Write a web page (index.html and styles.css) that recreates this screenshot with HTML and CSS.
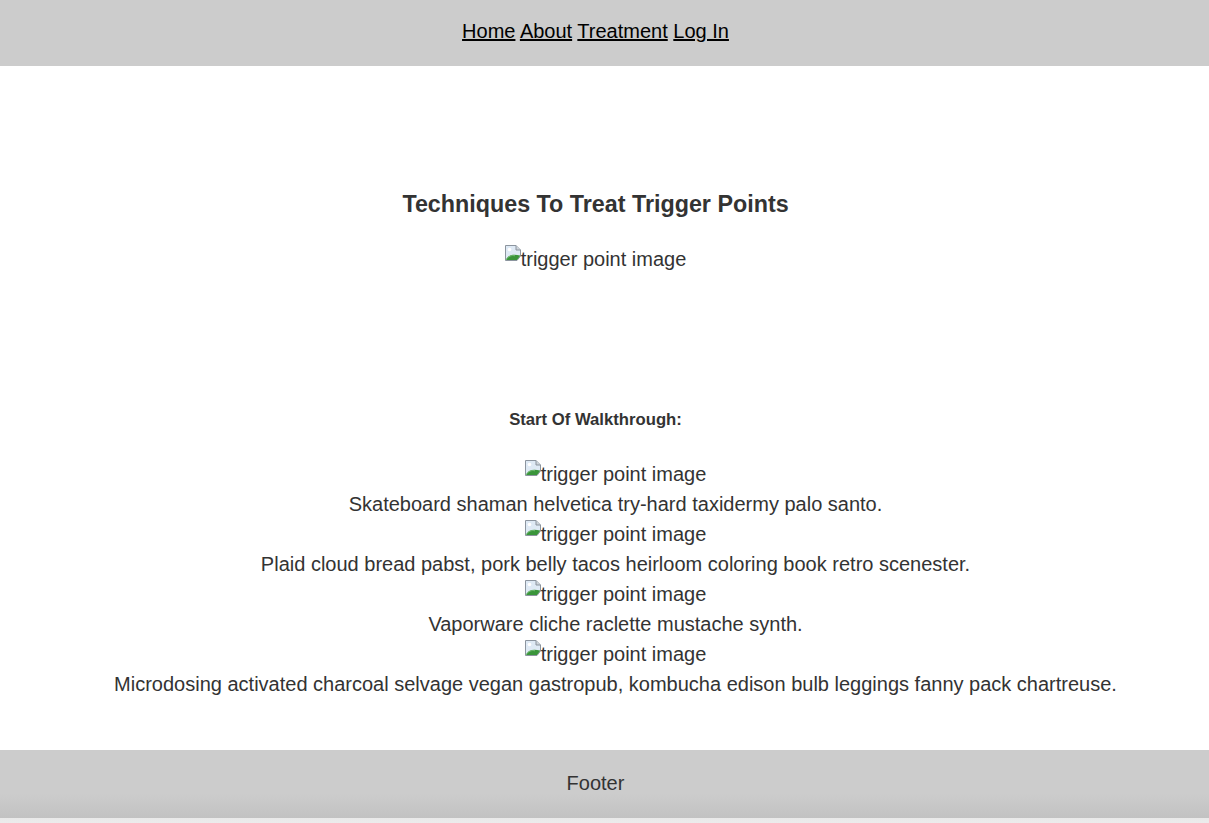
FILE: index.html
```html
<!DOCTYPE html>
<html lang="en">
<head>
<meta charset="utf-8">
<title>Treatment</title>
<link rel="stylesheet" href="styles.css">
</head>
<body>
<header class="nav">
  <nav class="nav-links"><a href="#">Home</a> <a href="#">About</a> <a href="#">Treatment</a> <a href="#">Log In</a></nav>
</header>
<main class="main">
  <section class="hero">
    <h2 class="hero-title">Techniques To Treat Trigger Points</h2>
    <div class="line"><span class="broken"><svg class="broken-icon" viewBox="0 0 16 16" width="16" height="16"><path d="M0.5 0.5 H11 L15.5 5 V11 L12 15.5 H0.5 Z" fill="#dfeaf5" stroke="#8c959f"/><path d="M11 0.5 V5 H15.5" fill="#cfd5db" stroke="#8c959f"/><path d="M1 15 C3 10 8 8.5 15 10.5 V11 L12 15 Z" fill="#3a953a"/><path d="M1 15 C3 11 7 10 10 10.8" fill="none" stroke="#76bb76" stroke-width="1"/><circle cx="4.5" cy="4.5" r="1.8" fill="#fff"/></svg>trigger point image</span></div>
  </section>
  <section class="walk">
    <h4 class="walk-title">Start Of Walkthrough:</h4>
    <div class="steps">
      <div class="line"><span class="broken"><svg class="broken-icon" viewBox="0 0 16 16" width="16" height="16"><path d="M0.5 0.5 H11 L15.5 5 V11 L12 15.5 H0.5 Z" fill="#dfeaf5" stroke="#8c959f"/><path d="M11 0.5 V5 H15.5" fill="#cfd5db" stroke="#8c959f"/><path d="M1 15 C3 10 8 8.5 15 10.5 V11 L12 15 Z" fill="#3a953a"/><path d="M1 15 C3 11 7 10 10 10.8" fill="none" stroke="#76bb76" stroke-width="1"/><circle cx="4.5" cy="4.5" r="1.8" fill="#fff"/></svg>trigger point image</span></div>
      <p class="line">Skateboard shaman helvetica try-hard taxidermy palo santo.</p>
      <div class="line"><span class="broken"><svg class="broken-icon" viewBox="0 0 16 16" width="16" height="16"><path d="M0.5 0.5 H11 L15.5 5 V11 L12 15.5 H0.5 Z" fill="#dfeaf5" stroke="#8c959f"/><path d="M11 0.5 V5 H15.5" fill="#cfd5db" stroke="#8c959f"/><path d="M1 15 C3 10 8 8.5 15 10.5 V11 L12 15 Z" fill="#3a953a"/><path d="M1 15 C3 11 7 10 10 10.8" fill="none" stroke="#76bb76" stroke-width="1"/><circle cx="4.5" cy="4.5" r="1.8" fill="#fff"/></svg>trigger point image</span></div>
      <p class="line">Plaid cloud bread pabst, pork belly tacos heirloom coloring book retro scenester.</p>
      <div class="line"><span class="broken"><svg class="broken-icon" viewBox="0 0 16 16" width="16" height="16"><path d="M0.5 0.5 H11 L15.5 5 V11 L12 15.5 H0.5 Z" fill="#dfeaf5" stroke="#8c959f"/><path d="M11 0.5 V5 H15.5" fill="#cfd5db" stroke="#8c959f"/><path d="M1 15 C3 10 8 8.5 15 10.5 V11 L12 15 Z" fill="#3a953a"/><path d="M1 15 C3 11 7 10 10 10.8" fill="none" stroke="#76bb76" stroke-width="1"/><circle cx="4.5" cy="4.5" r="1.8" fill="#fff"/></svg>trigger point image</span></div>
      <p class="line">Vaporware cliche raclette mustache synth.</p>
      <div class="line"><span class="broken"><svg class="broken-icon" viewBox="0 0 16 16" width="16" height="16"><path d="M0.5 0.5 H11 L15.5 5 V11 L12 15.5 H0.5 Z" fill="#dfeaf5" stroke="#8c959f"/><path d="M11 0.5 V5 H15.5" fill="#cfd5db" stroke="#8c959f"/><path d="M1 15 C3 10 8 8.5 15 10.5 V11 L12 15 Z" fill="#3a953a"/><path d="M1 15 C3 11 7 10 10 10.8" fill="none" stroke="#76bb76" stroke-width="1"/><circle cx="4.5" cy="4.5" r="1.8" fill="#fff"/></svg>trigger point image</span></div>
      <p class="line">Microdosing activated charcoal selvage vegan gastropub, kombucha edison bulb leggings fanny pack chartreuse.</p>
    </div>
  </section>
</main>
<footer class="footer">Footer</footer>
</body>
</html>
```
FILE: styles.css
```css
* { box-sizing: border-box; }
html, body { margin: 0; padding: 0; }
body {
  font-family: "Liberation Sans", Arial, sans-serif;
  color: #333;
  background: #fff;
  min-height: 823px;
  display: flex;
  flex-direction: column;
}
.nav {
  height: 66px;
  background: #ccc;
  display: flex;
  align-items: center;
  justify-content: center;
  padding-bottom: 4px;
  padding-right: 18px;
}
.nav-links {
  font-size: 20px;
  line-height: 24px;
}
.nav-links a {
  color: #000;
  text-decoration: underline;
}
.main {
  text-align: center;
  flex: 1;
  padding-right: 18px;
}
.hero {
  padding-top: 125px;
}
.hero-title {
  margin: 0;
  font-size: 23.3px;
  line-height: 26px;
  font-weight: bold;
}
.line {
  margin: 0;
  font-size: 20px;
  line-height: 30px;
}
.hero .line {
  margin-top: 27px;
}
.broken {
  display: inline-flex;
  align-items: baseline;
}
.broken-icon {
  display: block;
  flex: none;
  width: 16px;
  height: 16px;
  align-self: flex-start;
  margin-top: 1px;
}
.walk {
  padding-top: 136px;
  padding-bottom: 51px;
}
.walk-title {
  margin: 0 0 29px;
  font-size: 16.7px;
  line-height: 20px;
  font-weight: bold;
}
.steps {
  padding-left: 40px;
}
.footer {
  height: 73px;
  background: linear-gradient(#ccc 0, #ccc 60%, #c2c2c2 68px, #e9e9e9 68px, #ececec 73px);
  font-size: 20px;
  line-height: 66px;
  text-align: center;
  padding-right: 18px;
}
```
